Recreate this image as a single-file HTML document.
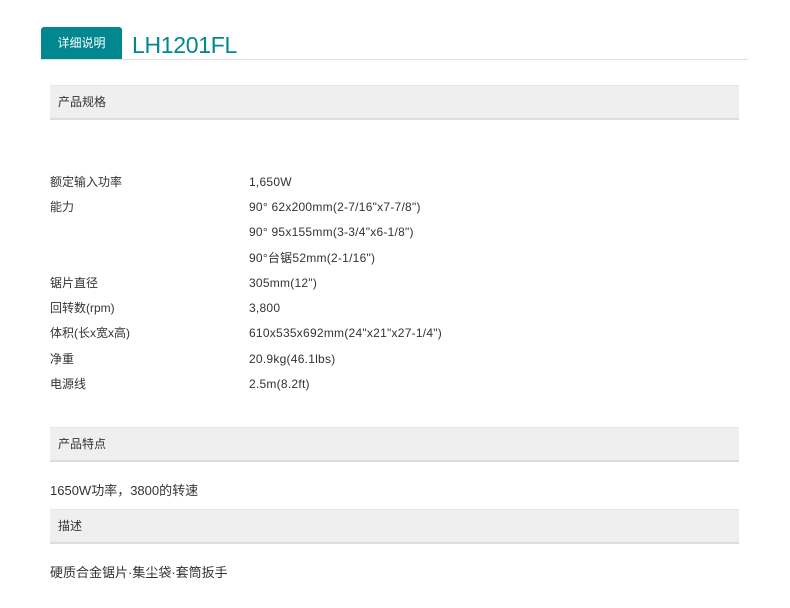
<!DOCTYPE html>
<html><head><meta charset="utf-8"><style>
body{margin:0;background:#fff;font-family:"Liberation Sans","Noto Sans CJK SC",sans-serif;color:#333;width:790px;height:608px;position:relative;overflow:hidden}
.a{position:absolute}
.tab{left:41px;top:27px;width:81px;height:32px;background:#00878f;color:#fff;font-size:12px;line-height:33px;text-align:center;border-radius:3px 3px 0 0}
.title{left:132px;top:30px;font-size:23px;color:#00878f;line-height:30px;letter-spacing:-0.3px}
.line{left:41px;top:59px;width:707px;height:1px;background:#ddd}
.hd{left:50px;width:689px;height:32px;background:#efefef;border-bottom:2px solid #ddd;border-top:1px solid #e6e6e6;font-size:12px;line-height:32px;text-indent:8px;color:#333}
.r{left:50px;font-size:12px;line-height:16px;height:16px;top:0}
.v{left:249px;letter-spacing:0.25px}
.t{left:50px;font-size:13px;line-height:18px}
</style></head><body>
<div class="a tab">详细说明</div>
<div class="a title">LH1201FL</div>
<div class="a line"></div>
<div class="a hd" style="top:85px">产品规格</div>
<div class="a r" style="top:174px">额定输入功率</div><div class="a r v" style="top:174px">1,650W</div>
<div class="a r" style="top:199px">能力</div><div class="a r v" style="top:199px">90° 62x200mm(2-7/16"x7-7/8")</div>
<div class="a r v" style="top:224px">90° 95x155mm(3-3/4"x6-1/8")</div>
<div class="a r v" style="top:250px">90°台锯52mm(2-1/16")</div>
<div class="a r" style="top:275px">锯片直径</div><div class="a r v" style="top:275px">305mm(12")</div>
<div class="a r" style="top:300px">回转数(rpm)</div><div class="a r v" style="top:300px">3,800</div>
<div class="a r" style="top:325px">体积(长x宽x高)</div><div class="a r v" style="top:325px">610x535x692mm(24"x21"x27-1/4")</div>
<div class="a r" style="top:351px">净重</div><div class="a r v" style="top:351px">20.9kg(46.1lbs)</div>
<div class="a r" style="top:376px">电源线</div><div class="a r v" style="top:376px">2.5m(8.2ft)</div>
<div class="a hd" style="top:427px">产品特点</div>
<div class="a t" style="top:482px">1650W功率，3800的转速</div>
<div class="a hd" style="top:509px">描述</div>
<div class="a t" style="top:564px">硬质合金锯片·集尘袋·套筒扳手</div>
</body></html>
